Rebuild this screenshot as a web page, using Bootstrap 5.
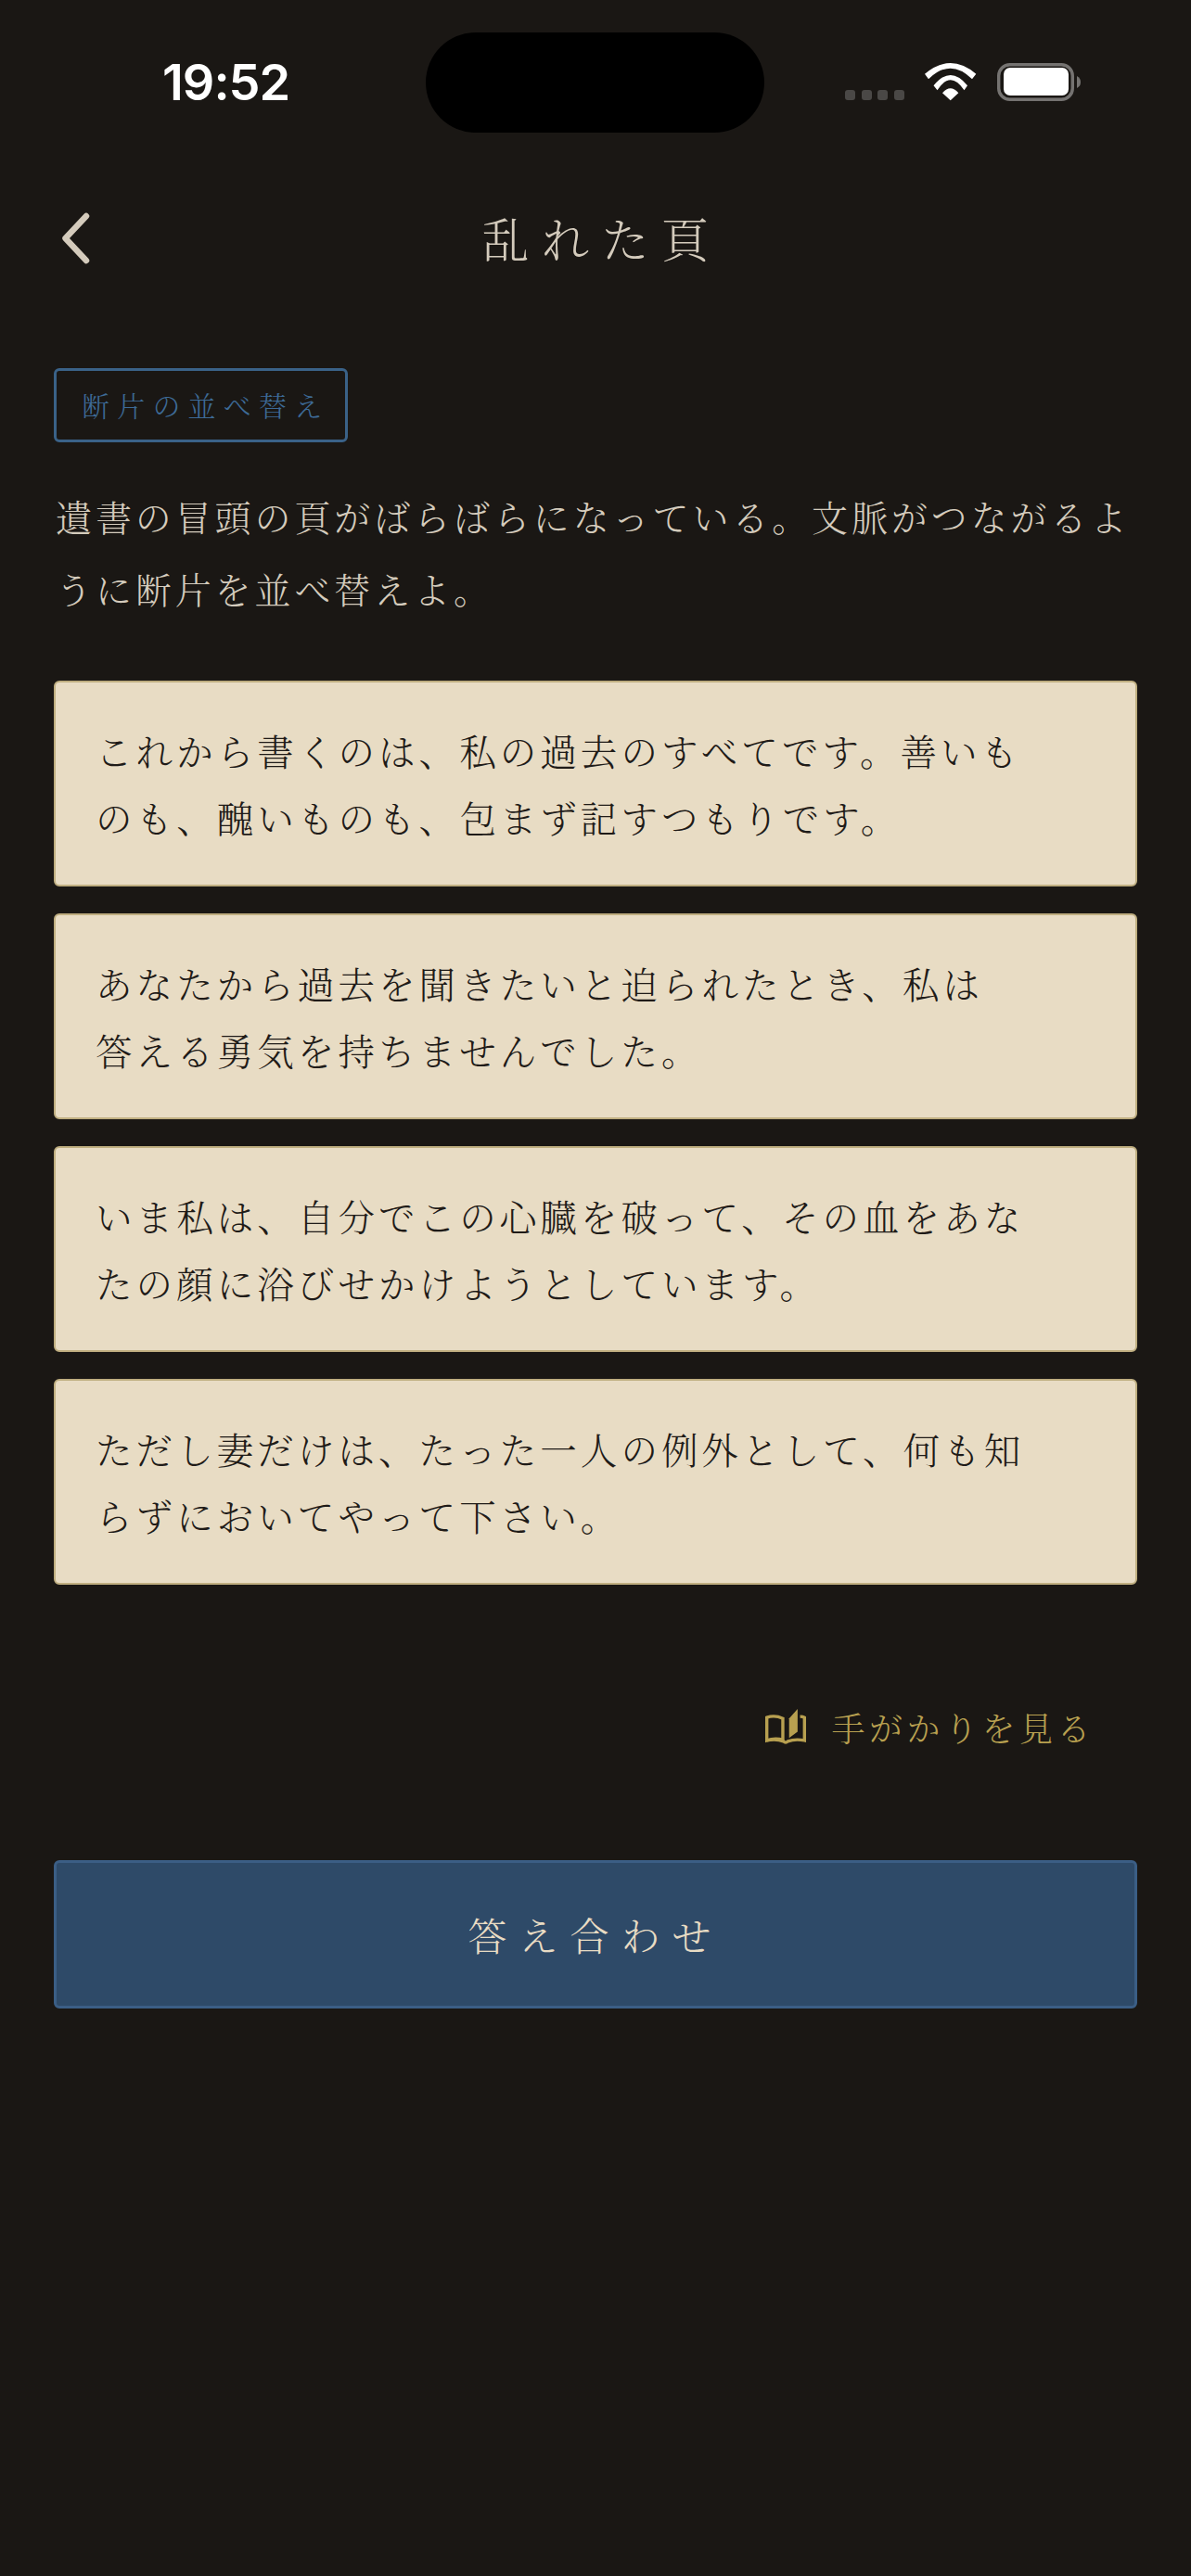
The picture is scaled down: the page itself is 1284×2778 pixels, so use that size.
<!DOCTYPE html>
<html lang="ja">
<head>
<meta charset="utf-8">
<title>乱れた頁</title>
<link href="https://cdn.jsdelivr.net/npm/bootstrap@5.3.0/dist/css/bootstrap.min.css" rel="stylesheet">
<style>
html,body{background:#1a1714;}
body{font-family:"Noto Serif CJK JP","Noto Sans CJK JP",serif;font-weight:300;min-height:2778px;}
.status-wrap{height:176px;position:relative;}
.status-time{font-family:Inter,"Liberation Sans",sans-serif;font-weight:600;font-size:54px;line-height:54px;letter-spacing:-1px;color:#fff;left:175px;top:62px;position:absolute;}
.island{position:absolute;left:459px;top:35px;width:365px;height:108px;border-radius:54px;background:#000;}
.status-icons{position:absolute;left:911px;top:67px;width:254px;height:43px;}
.sig{width:11px;height:11px;border-radius:3px;background:#4a4846;}
.sig-row{gap:6.6px;margin-top:30px;width:64px;}
.nav-row{height:162px;padding:0 58px;display:grid;grid-template-columns:1fr auto 1fr;align-items:center;}
.nav-title{font-size:51px;line-height:1.2;letter-spacing:13.5px;color:#d4cbbc;margin:0;padding-left:13px;font-weight:300;}
.main-col{padding:0 58px;}
.tag-box{margin-top:59px;border:3px solid #3a6288;border-radius:6px;color:#3d6a96;font-size:30px;line-height:45px;letter-spacing:8.2px;padding:14px 17px 15px 27px;}
.lead-text{margin:40px 0 61px 2px;font-size:39px;line-height:78px;letter-spacing:3.9px;color:#d4cbbc;}
.frag-list{gap:29px;}
.frag-card{background:#e8dcc4;border:2px solid #bfae80;border-radius:6px;padding:37px 43px;font-size:39.5px;line-height:72px;letter-spacing:4.07px;color:#1f1b18;white-space:nowrap;}
.hint-row{margin-top:127px;padding-right:46px;gap:27px;color:#b8a050;font-size:36px;line-height:54px;letter-spacing:4.5px;}
.hint-row svg{width:44px;height:38px;flex:none;margin-top:-2px;}
.check-btn{margin-top:116px;width:100%;height:160px;background:#2e4a68;border:3px solid #3b5e85;border-radius:6px;color:#e8dcc4;font-size:42px;letter-spacing:13px;font-weight:300;}
</style>
</head>
<body class="m-0">
<div class="status-wrap">
  <div class="status-time">19:52</div>
  <div class="island"></div>
  <div class="status-icons d-flex">
    <div class="sig-row d-flex flex-none"><div class="sig"></div><div class="sig"></div><div class="sig"></div><div class="sig"></div></div>
    <svg width="254" height="43" viewBox="0 0 254 43" style="margin-left:-64px">
      <path d="M86 12.7 Q113.7 -10.7 141.3 12.7 L137 18.3 Q113.7 -4.9 90 18.3 Z M95.5 25.3 Q113.7 2.7 132 25.3 L128.5 30.3 Q113.7 8.3 99.5 30.3 Z M105 33.3 Q113.7 23.3 122.3 33.3 L113.7 41.3 Z" fill="#fff"/>
      <rect x="165.7" y="2.7" width="79.6" height="37.6" rx="12" fill="none" stroke="#757371" stroke-width="3.4"/>
      <rect x="171" y="6" width="70" height="30" rx="7" fill="#fff"/>
      <path d="M250 15 Q254 17 254 21.5 Q254 26 250 28 Z" fill="#757371"/>
    </svg>
  </div>
</div>
<div class="nav-row">
  <svg width="40" height="60" viewBox="0 0 40 60" class="ms-1">
    <path d="M31 6 L8.5 30 L31 54" fill="none" stroke="#d4cbbc" stroke-width="6.5" stroke-linecap="round" stroke-linejoin="round"/>
  </svg>
  <h1 class="nav-title">乱れた頁</h1>
  <div></div>
</div>
<main class="main-col">
  <span class="tag-box d-inline-block">断片の並べ替え</span>
  <p class="lead-text">遺書の冒頭の頁がばらばらになっている。文脈がつながるように断片を並べ替えよ。</p>
  <div class="frag-list d-flex flex-column">
    <div class="frag-card card">これから書くのは、私の過去のすべてです。善いも<br>のも、醜いものも、包まず記すつもりです。</div>
    <div class="frag-card card">あなたから過去を聞きたいと迫られたとき、私は<br>答える勇気を持ちませんでした。</div>
    <div class="frag-card card">いま私は、自分でこの心臓を破って、その血をあな<br>たの顔に浴びせかけようとしています。</div>
    <div class="frag-card card">ただし妻だけは、たった一人の例外として、何も知<br>らずにおいてやって下さい。</div>
  </div>
  <div class="hint-row d-flex justify-content-end align-items-center">
    <svg viewBox="0 0 130 112">
      <path d="M5 27 Q30 18 56 30 V98 Q30 91 5 100 Z" fill="none" stroke="#b8a050" stroke-width="10"/>
      <path d="M111 24 Q120 24 125 27 V100 Q95 94 72 103 Q65 110 58 103 Q35 94 5 100" fill="none" stroke="#b8a050" stroke-width="10"/>
      <path d="M76 30 L103 0 V72 L76 92 Z" fill="#b8a050"/>
    </svg>
    <span>手がかりを見る</span>
  </div>
  <button type="button" class="btn check-btn">答え合わせ</button>
</main>
<script src="https://cdn.jsdelivr.net/npm/bootstrap@5.3.0/dist/js/bootstrap.bundle.min.js"></script>
</body>
</html>
